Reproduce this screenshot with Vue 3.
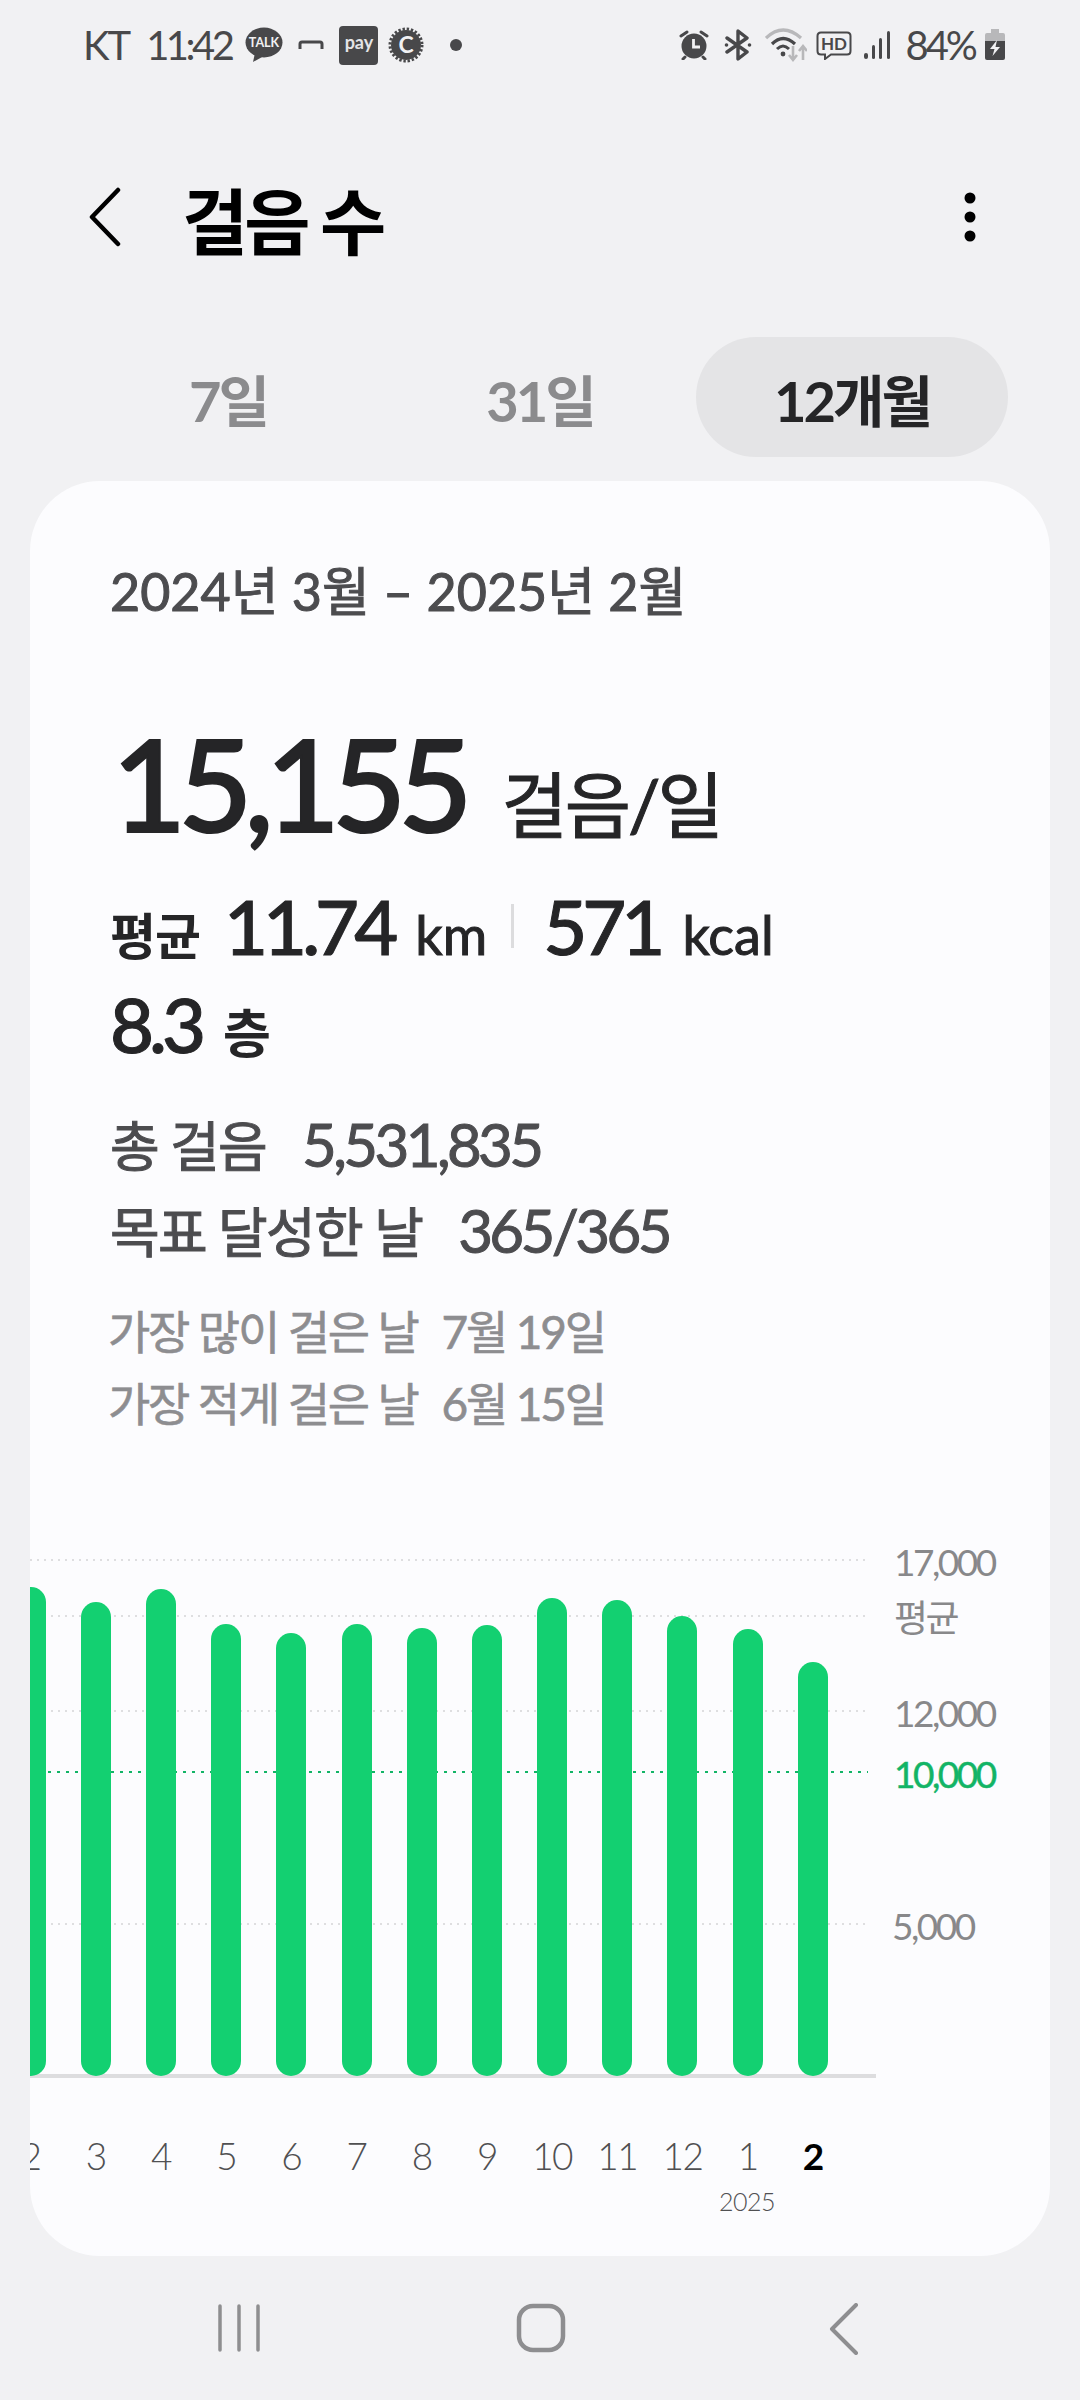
<template>
  <div class="page">
    <div class="status">
      <span class="status-text">KT</span>
      <span class="status-text time">11:42</span>
      <svg class="ic" width="38" height="36" viewBox="0 0 38 36">
        <ellipse cx="19" cy="15.5" rx="18.5" ry="15" fill="#48484a" />
        <path d="M10 26 L8 35 L19 29 Z" fill="#48484a" />
        <text x="19" y="20" class="talk">TALK</text>
      </svg>
      <svg class="ic mail" width="26" height="10" viewBox="0 0 26 10">
        <path d="M2 9 V4 Q2 2 4 2 H22 Q24 2 24 4 V9" fill="none" stroke="#48484a" stroke-width="3" />
      </svg>
      <div class="pay">pay</div>
      <svg class="ic coin" width="36" height="36" viewBox="0 0 36 36">
        <circle cx="18" cy="18" r="15" fill="#48484a" />
        <circle cx="18" cy="18" r="16" fill="none" stroke="#48484a" stroke-width="3" stroke-dasharray="2.4 1.8" />
        <text x="18" y="26" class="coin-c">C</text>
      </svg>
      <span class="dot"></span>

      <svg class="ic alarm" width="30" height="30" viewBox="0 0 30 30">
        <circle cx="15" cy="16" r="12.5" fill="#48484a" />
        <path d="M2 6 L8 2 M28 6 L22 2 M6 27 L4 29 M24 27 L26 29" stroke="#48484a" stroke-width="3" stroke-linecap="round" />
        <path d="M14.5 9 V17 H21" fill="none" stroke="#f1f1f3" stroke-width="2.8" />
      </svg>
      <svg class="ic bt" width="28" height="32" viewBox="0 0 28 32">
        <path d="M3 9 L23 23 L14 30 V2 L23 9 L3 23" fill="none" stroke="#48484a" stroke-width="3.4" stroke-linejoin="round" stroke-linecap="round" />
        <circle cx="2.5" cy="16" r="1.8" fill="#48484a" />
        <circle cx="25.5" cy="16" r="1.8" fill="#48484a" />
      </svg>
      <svg class="ic wifi" width="42" height="36" viewBox="0 0 42 36">
        <path d="M1 11 Q18 -5 36 11" fill="none" stroke="#b8b8ba" stroke-width="3.2" />
        <path d="M7 17 Q18 6 30 17" fill="none" stroke="#48484a" stroke-width="3.2" />
        <path d="M12 22 Q18 16 24 22" fill="none" stroke="#48484a" stroke-width="3" />
        <circle cx="18" cy="27" r="2.4" fill="#48484a" />
        <path d="M28 19 V33 M24 28 L28 33 L32 28" fill="none" stroke="#b8b8ba" stroke-width="2.6" />
        <path d="M38 33 V19 M34 24 L38 19 L42 24" fill="none" stroke="#b8b8ba" stroke-width="2.6" />
      </svg>
      <svg class="ic hd" width="36" height="29" viewBox="0 0 36 29">
        <path d="M5 1.5 H31 Q34.500 1.500 34.500 5 V20 Q34.500 23.500 31 23.500 H15 L9 28 V23.500 H5 Q1.500 23.500 1.500 20 V5 Q1.500 1.500 5 1.500 Z" fill="none" stroke="#48484a" stroke-width="2" />
        <text x="18" y="19" class="hd-text">HD</text>
      </svg>
      <svg class="ic signal" width="28" height="28" viewBox="0 0 28 28">
        <rect x="1" y="22" width="4" height="6" rx="2" fill="#48484a" />
        <rect x="9" y="14" width="3" height="14" rx="1.500" fill="#48484a" />
        <rect x="16" y="7" width="3" height="21" rx="1.500" fill="#48484a" />
        <rect x="24" y="0" width="3" height="28" rx="1.500" fill="#48484a" />
      </svg>
      <span class="status-text pct">84%</span>
      <svg class="ic battery" width="22" height="32" viewBox="0 0 22 32">
        <path d="M7 0 H15 V4 H19 Q21 4 21 6 V12 H1 V6 Q1 4 3 4 H7 Z" fill="#b8b8ba" />
        <path d="M1 12 H21 V29 Q21 31 19 31 H3 Q1 31 1 29 Z" fill="#48484a" />
        <path d="M13 11 L6 20 H10.500 L8.500 27 L16 18 H11.500 Z" fill="#f1f1f3" />
      </svg>
    </div>

    <div class="topbar">
      <svg class="chev" width="34" height="60" viewBox="0 0 34 60">
        <path d="M29 3 L3 30 L29 57" fill="none" stroke="#000" stroke-width="4.5" stroke-linecap="round" stroke-linejoin="round" />
      </svg>
      <div class="title">걸음 수</div>
      <svg class="more" width="12" height="50" viewBox="0 0 12 50">
        <circle cx="6" cy="6" r="5.500" />
        <circle cx="6" cy="25" r="5.500" />
        <circle cx="6" cy="44" r="5.500" />
      </svg>
    </div>

    <div class="tabs">
      <div v-for="t in tabs" :key="t" class="tab" :class="{ active: t === '12개월' }">{{ t }}</div>
    </div>

    <div class="card">
      <div class="summary">
        <div class="range">2024년 3월 – 2025년 2월</div>
        <div class="hero">
          <span class="hero-num">15,155</span>
          <span class="hero-unit">걸음/일</span>
        </div>
        <div class="avg">
          <span class="avg-label">평균</span>
          <span class="avg-num">11.74</span>
          <span class="avg-unit">km</span>
          <span class="sep"></span>
          <span class="avg-num">571</span>
          <span class="avg-unit">kcal</span>
        </div>
        <div class="avg floors">
          <span class="avg-num">8.3</span>
          <span class="avg-label">층</span>
        </div>
        <div class="totals">
          <div class="total-row">
            <span class="total-label">총 걸음</span>
            <span class="total-num">5,531,835</span>
          </div>
          <div class="total-row">
            <span class="total-label">목표 달성한 날</span>
            <span class="total-num">365/365</span>
          </div>
        </div>
        <div class="extremes">
          <div class="extreme-row"><span>가장 많이 걸은 날</span><span>7월 19일</span></div>
          <div class="extreme-row"><span>가장 적게 걸은 날</span><span>6월 15일</span></div>
        </div>
      </div>

      <div class="chart">
        <div class="plot">
          <div
            v-for="l in lines"
            :key="l.value"
            class="grid-line"
            :class="{ goal: l.goal }"
            :style="{ bottom: toPx(l.value) }"
          ></div>
          <div class="axis"></div>
          <div class="bars">
            <div v-for="(b, i) in bars" :key="i" class="bar-col">
              <div class="bar" :style="{ height: toPx(b.steps) }"></div>
            </div>
          </div>
          <div
            v-for="l in lines"
            :key="l.text"
            class="y-label"
            :class="{ goal: l.goal, short: l.value === 5000 }"
            :style="{ bottom: toPx(l.value) }"
          >{{ l.text }}</div>
        </div>
        <div class="months">
          <div v-for="(b, i) in bars" :key="i" class="month" :class="{ current: i === bars.length - 1 }">{{ b.month }}</div>
        </div>
        <div class="year-row">
          <div class="year">2025</div>
        </div>
      </div>
    </div>

    <div class="nav">
      <svg width="44" height="50" viewBox="0 0 44 50">
        <path d="M3 3 V47 M22 3 V47 M41 3 V47" stroke="#8e8e90" stroke-width="3.5" stroke-linecap="round" />
      </svg>
      <svg width="50" height="50" viewBox="0 0 50 50">
        <rect x="3" y="3" width="44" height="44" rx="14" fill="none" stroke="#8e8e90" stroke-width="4.5" />
      </svg>
      <svg width="30" height="52" viewBox="0 0 30 52">
        <path d="M27 2 L3 26 L27 50" fill="none" stroke="#8e8e90" stroke-width="4" stroke-linecap="round" stroke-linejoin="round" />
      </svg>
    </div>
  </div>
</template>

<script setup>
const tabs = ['7일', '31일', '12개월'];

const bars = [
  { month: '2', steps: 16140 },
  { month: '3', steps: 15640 },
  { month: '4', steps: 16070 },
  { month: '5', steps: 14920 },
  { month: '6', steps: 14620 },
  { month: '7', steps: 14920 },
  { month: '8', steps: 14790 },
  { month: '9', steps: 14880 },
  { month: '10', steps: 15780 },
  { month: '11', steps: 15710 },
  { month: '12', steps: 15180 },
  { month: '1', steps: 14750 },
  { month: '2', steps: 13660 },
];

const lines = [
  { text: '17,000', value: 17000 },
  { text: '평균', value: 15155 },
  { text: '12,000', value: 12000 },
  { text: '10,000', value: 10000, goal: true },
  { text: '5,000', value: 5000 },
];

const toPx = (v) => `${v * 0.0303}px`;
</script>

<style>
body {
  background: #f1f1f3;
}
</style>

<style scoped>
.page {
  width: 1080px;
  height: 2400px;
  overflow: hidden;
  background: #f1f1f3;
  display: flex;
  flex-direction: column;
  font-family: Lato, "Noto Sans CJK KR", sans-serif;
  color: #252527;
}

.status {
  height: 90px;
  padding-left: 83px;
  display: flex;
  align-items: center;
  color: #48484a;
}
.status-text {
  font-size: 40px;
  letter-spacing: -2px;
}
.time {
  margin-left: 17px;
  letter-spacing: -3.5px;
}
.ic {
  flex: none;
}
.status > svg:first-of-type {
  margin-left: 14px;
}
.talk {
  font: 700 12.5px Lato, sans-serif;
  fill: #f1f1f3;
  text-anchor: middle;
}
.mail {
  margin-left: 15px;
}
.pay {
  margin-left: 15px;
  width: 39px;
  height: 39px;
  border-radius: 4px;
  background: #48484a;
  color: #e4e4e6;
  font-size: 18px;
  font-weight: 700;
  text-align: center;
  line-height: 32px;
}
.coin {
  margin-left: 10px;
}
.coin-c {
  font: 700 23px Lato, sans-serif;
  fill: #f1f1f3;
  text-anchor: middle;
}
.dot {
  width: 12px;
  height: 12px;
  border-radius: 50%;
  background: #48484a;
  margin-left: 26px;
}
.alarm {
  margin-left: 217px;
}
.bt {
  margin-left: 15px;
}
.wifi {
  margin-left: 13px;
}
.hd {
  margin-left: 9px;
}
.hd-text {
  font: 700 17px Lato, sans-serif;
  fill: #48484a;
  text-anchor: middle;
}
.signal {
  margin-left: 11px;
}
.pct {
  margin-left: 14px;
  letter-spacing: -3px;
}
.battery {
  margin-left: 9px;
}

.topbar {
  margin-top: 72px;
  height: 110px;
  padding: 0 104px 0 89px;
  display: flex;
  align-items: center;
}
.title {
  margin-left: 59px;
  flex: 1;
  font-size: 72px;
  font-weight: 700;
  letter-spacing: -4px;
  color: #000;
}
.more {
  fill: #000;
}

.tabs {
  margin: 65px 72px 0;
  height: 120px;
  display: grid;
  grid-template-columns: repeat(3, 1fr);
}
.tab {
  display: flex;
  align-items: center;
  justify-content: center;
  border-radius: 60px;
  font-size: 56px;
  font-weight: 700;
  letter-spacing: -3px;
  color: #8b8b8d;
}
.tab.active {
  background: #e4e4e6;
  color: #252527;
}

.card {
  margin: 24px 30px 0;
  height: 1775px;
  border-radius: 70px;
  background: #fcfcfe;
  overflow: hidden;
  display: flex;
  flex-direction: column;
}

.summary {
  padding: 78px 0 0 80px;
}
.range {
  font-size: 52px;
  line-height: 64px;
  letter-spacing: 0;
  -webkit-text-stroke: 1px currentColor;
  color: #4c4c4f;
}
.hero {
  margin-top: 95px;
  display: flex;
  align-items: baseline;
  height: 130px;
  padding-left: 2px;
}
.hero-num {
  font-size: 128px;
  line-height: 130px;
  font-weight: 500;
  letter-spacing: -8px;
  -webkit-text-stroke: 2px currentColor;
}
.hero-unit {
  margin-left: 37px;
  font-size: 72px;
  letter-spacing: -3px;
  -webkit-text-stroke: 1px currentColor;
}
.avg {
  margin-top: 40px;
  display: flex;
  align-items: baseline;
  height: 76px;
}
.avg-label {
  font-size: 50px;
  font-weight: 700;
  letter-spacing: -1px;
}
.avg-num {
  margin-left: 24px;
  font-size: 76px;
  line-height: 76px;
  font-weight: 500;
  letter-spacing: -5px;
  -webkit-text-stroke: 1px currentColor;
}
.avg-unit {
  margin-left: 22px;
  font-size: 54px;
  -webkit-text-stroke: 1px currentColor;
}
.sep {
  align-self: center;
  width: 3px;
  height: 44px;
  margin: 0 5px 0 24px;
  background: #dcdcde;
}
.floors {
  margin-top: 22px;
}
.floors .avg-num {
  margin-left: 0;
}
.floors .avg-label {
  margin-left: 22px;
  font-size: 52px;
}
.totals {
  margin-top: 39px;
  color: #4c4c4f;
  font-size: 54px;
}
.total-row {
  display: flex;
  align-items: baseline;
  gap: 36px;
  height: 86px;
  line-height: 86px;
}
.total-label {
  letter-spacing: -1.7px;
  -webkit-text-stroke: 1px currentColor;
}
.total-num {
  font-size: 60px;
  letter-spacing: -3.6px;
  -webkit-text-stroke: 1px currentColor;
}
.extremes {
  margin-top: 23px;
  margin-left: -2px;
  color: #8d8d90;
  font-size: 46px;
  letter-spacing: -2.2px;
  -webkit-text-stroke: 0.6px currentColor;
}
.extreme-row {
  display: flex;
  gap: 24px;
  height: 72px;
  line-height: 72px;
}

.chart {
  margin-top: auto;
  height: 716px;
  position: relative;
}
.plot {
  position: relative;
  height: 535px;
}
.grid-line {
  position: absolute;
  left: 0;
  width: 838px;
  height: 2px;
  margin-bottom: -1px;
  background: repeating-linear-gradient(90deg, #dedee0 0 2px, transparent 2px 7px);
}
.grid-line.goal {
  background: repeating-linear-gradient(90deg, #12b466 0 3px, transparent 3px 9px);
}
.axis {
  position: absolute;
  left: 0;
  bottom: -3px;
  width: 846px;
  height: 4px;
  background: #dddddf;
}
.bars,
.months {
  display: grid;
  grid-template-columns: repeat(13, 65.2px);
  margin-left: -32px;
}
.bars {
  position: absolute;
  left: 0;
  bottom: -1px;
  align-items: end;
}
.bar-col {
  display: flex;
  justify-content: center;
}
.bar {
  width: 30px;
  border-radius: 15px;
  background: #13d071;
}
.y-label {
  position: absolute;
  left: 864px;
  transform: translateY(50%);
  margin-bottom: -2px;
  font-size: 37px;
  line-height: 44px;
  color: #88888a;
  letter-spacing: -2.5px;
}
.y-label.goal {
  color: #12b466;
  -webkit-text-stroke: 0.5px currentColor;
}
.y-label.short {
  left: 862px;
}
.months {
  margin-top: 59px;
}
.month {
  text-align: center;
  font-size: 37px;
  line-height: 44px;
  font-weight: 300;
  letter-spacing: -1.5px;
  color: #505052;
}
.month.current {
  font-weight: 700;
  color: #000;
}
.year-row {
  margin-top: 8px;
  padding-left: 681px;
}
.year {
  width: 72px;
  text-align: center;
  font-size: 25px;
  line-height: 30px;
  font-weight: 300;
  letter-spacing: -0.5px;
  color: #505052;
}

.nav {
  flex: 1;
  display: flex;
  align-items: flex-start;
  padding: 47px 0 0 217px;
}
.nav svg:nth-child(2) {
  margin-left: 255px;
}
.nav svg:nth-child(3) {
  margin-left: 263px;
}
</style>
